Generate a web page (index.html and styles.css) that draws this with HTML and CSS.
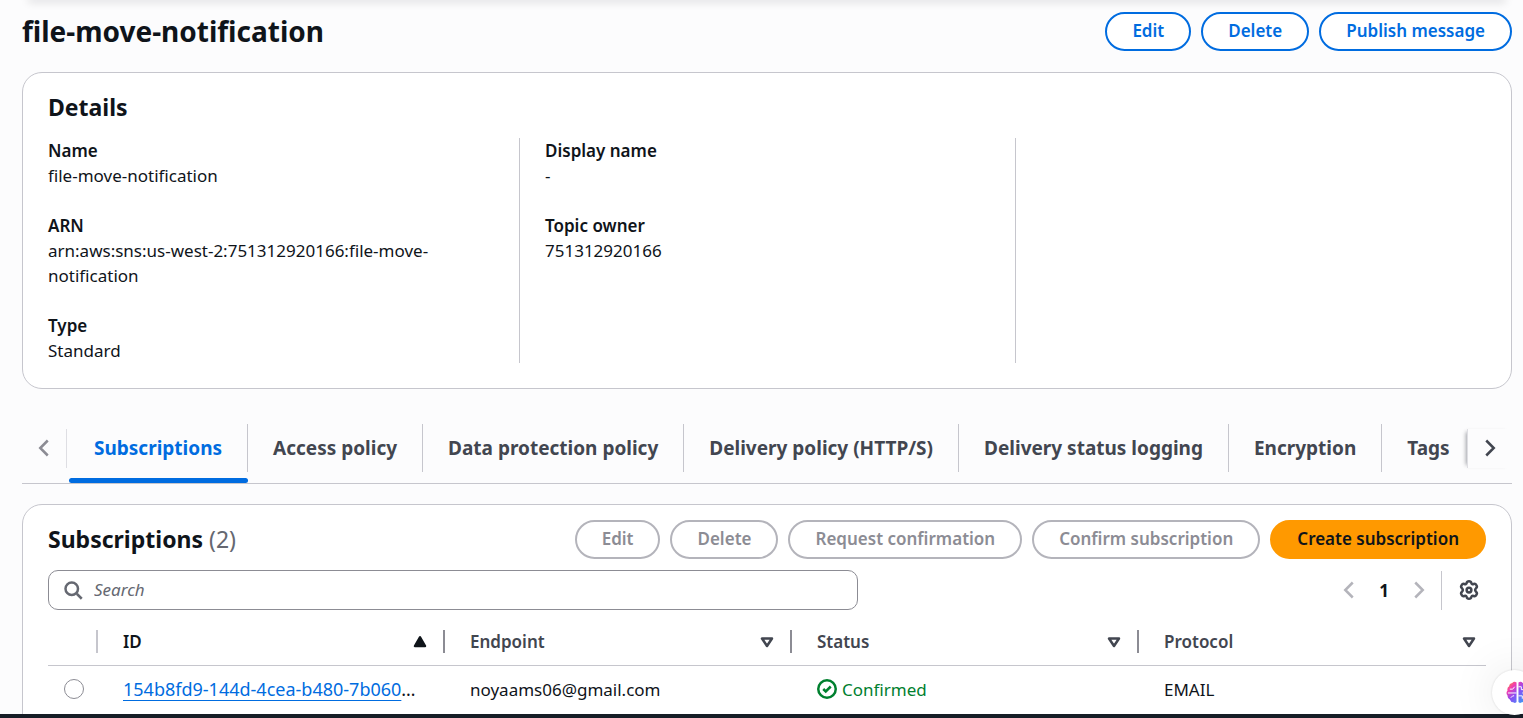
FILE: index.html
```html
<!DOCTYPE html>
<html lang="en">
<head>
<meta charset="utf-8">
<title>file-move-notification</title>
<link rel="stylesheet" href="styles.css">
</head>
<body>
<main class="page">
  <div class="sticky-edge"></div>
  <header class="page-header">
    <h1>file-move-notification</h1>
    <div class="actions">
      <button class="btn" type="button">Edit</button>
      <button class="btn" type="button">Delete</button>
      <button class="btn" type="button">Publish message</button>
    </div>
  </header>

  <section class="card details">
    <h2>Details</h2>
    <div class="columns">
      <dl class="column">
        <div><dt>Name</dt><dd>file-move-notification</dd></div>
        <div><dt>ARN</dt><dd>arn:aws:sns:us-west-2:751312920166:file-move-notification</dd></div>
        <div><dt>Type</dt><dd>Standard</dd></div>
      </dl>
      <dl class="column">
        <div><dt>Display name</dt><dd>-</dd></div>
        <div><dt>Topic owner</dt><dd>751312920166</dd></div>
      </dl>
      <div class="column"></div>
    </div>
  </section>

  <nav class="tabs" aria-label="Topic sections">
    <button class="scroll scroll-left" type="button" aria-label="Scroll left" disabled>
      <svg class="icon" viewBox="0 0 16 16"><path d="M11 2 5 8l6 6"/></svg>
    </button>
    <div class="tab-list" role="tablist">
      <button class="tab active" role="tab" aria-selected="true" type="button"><span>Subscriptions</span></button>
      <button class="tab" role="tab" type="button"><span>Access policy</span></button>
      <button class="tab" role="tab" type="button"><span>Data protection policy</span></button>
      <button class="tab" role="tab" type="button"><span>Delivery policy (HTTP/S)</span></button>
      <button class="tab" role="tab" type="button"><span>Delivery status logging</span></button>
      <button class="tab" role="tab" type="button"><span>Encryption</span></button>
      <button class="tab" role="tab" type="button"><span>Tags</span></button>
    </div>
    <button class="scroll scroll-right" type="button" aria-label="Scroll right">
      <svg class="icon" viewBox="0 0 16 16"><path d="m5 2 6 6-6 6"/></svg>
    </button>
  </nav>

  <section class="card subscriptions">
    <div class="table-header">
      <h2>Subscriptions <span class="count">(2)</span></h2>
      <div class="actions">
        <button class="btn" type="button" disabled>Edit</button>
        <button class="btn" type="button" disabled>Delete</button>
        <button class="btn" type="button" disabled>Request confirmation</button>
        <button class="btn" type="button" disabled>Confirm subscription</button>
        <button class="btn primary" type="button">Create subscription</button>
      </div>
    </div>
    <div class="tools">
      <label class="search">
        <svg class="icon" viewBox="0 0 16 16"><circle cx="7" cy="7" r="5"/><path d="m11 11 4 4"/></svg>
        <input type="search" placeholder="Search" aria-label="Search">
      </label>
      <div class="pager">
        <button type="button" aria-label="Previous page" disabled><svg class="icon" viewBox="0 0 16 16"><path d="M11 2 5 8l6 6"/></svg></button>
        <button class="current" type="button">1</button>
        <button type="button" aria-label="Next page" disabled><svg class="icon" viewBox="0 0 16 16"><path d="m5 2 6 6-6 6"/></svg></button>
      </div>
      <button class="settings" type="button" aria-label="Preferences">
        <svg class="icon" viewBox="0 0 16 16"><path d="M6.2 2.3Q6.400 1 8 1T9.800 2.300Q10.300 3.700 11.700 3.200 13.100 2.700 13.900 4.100 14.900 5.600 13.600 6.600 12.300 8 13.600 9.400 14.900 10.400 13.900 11.900 13.100 13.300 11.700 12.800 10.300 12.300 9.800 13.700 9.600 15 8 15T6.200 13.700Q5.700 12.300 4.300 12.800 2.900 13.300 2.100 11.900 1.100 10.400 2.400 9.400 3.700 8 2.400 6.600 1.100 5.600 2.100 4.100 2.900 2.700 4.300 3.200 5.700 3.700 6.200 2.300Z"/><circle cx="8" cy="8" r="1.900"/></svg>
      </button>
    </div>
    <table>
      <colgroup><col class="c-select"><col class="c-id"><col class="c-mid"><col class="c-mid"><col></colgroup>
      <thead>
        <tr>
          <th aria-label="Selection"></th>
          <th class="sorted"><div class="th">ID <svg class="icon caret" viewBox="0 0 16 16"><path d="M8 5 4 12h8Z"/></svg></div></th>
          <th><div class="th">Endpoint <svg class="icon caret" viewBox="0 0 16 16"><path d="M4 6h8l-4 6Z"/></svg></div></th>
          <th><div class="th">Status <svg class="icon caret" viewBox="0 0 16 16"><path d="M4 6h8l-4 6Z"/></svg></div></th>
          <th><div class="th">Protocol <svg class="icon caret" viewBox="0 0 16 16"><path d="M4 6h8l-4 6Z"/></svg></div></th>
        </tr>
      </thead>
      <tbody>
        <tr>
          <td class="select"><input type="radio" name="subscription" aria-label="Select subscription"></td>
          <td class="id"><a href="#">154b8fd9-144d-4cea-b480-7b060</a>…</td>
          <td>noyaams06@gmail.com</td>
          <td><span class="status"><svg class="icon" viewBox="0 0 16 16"><circle cx="8" cy="8" r="7"/><path d="m5 8 2 2 4-4"/></svg>Confirmed</span></td>
          <td>EMAIL</td>
        </tr>
      </tbody>
    </table>
  </section>
</main>
<footer class="footer"></footer>
<button class="assistant" type="button" aria-label="Assistant">
  <svg viewBox="0 0 24 24">
    <defs><linearGradient id="brain" x1="0" y1="0" x2="1" y2="1"><stop offset="0" stop-color="#ff9a1f"/><stop offset=".25" stop-color="#f23bb0"/><stop offset=".5" stop-color="#8a4df5"/><stop offset="1" stop-color="#22b5f5"/></linearGradient></defs>
    <path fill="url(#brain)" d="M11 1.500Q8.500 0 6.500 2 3.500 2.500 3.300 5.500.8 7 1.600 10-.6 12.500 1.600 15 1.300 18 4 19.200 5 22 7.500 22.200 9.800 23.600 11 22ZM13 1.500Q15.500 0 17.500 2 20.500 2.500 20.700 5.500 23.200 7 22.400 10 24.600 12.500 22.400 15 22.700 18 20 19.200 19 22 16.500 22.200 14.200 23.600 13 22Z"/>
    <path fill="none" stroke="#fff" stroke-width="1" d="M2 12.500h9M4 8.500h3l2-2.500M5 17.500l2-2h1.500M22 12.500h-5M13 6h3v3h3M13 15.500h4v3"/>
  </svg>
</button>
</body>
</html>
```
FILE: styles.css
```css
* { box-sizing: border-box; }

body {
  margin: 0;
  height: 100vh;
  display: flex;
  flex-direction: column;
  overflow: hidden;
  background: #fcfcfd;
  color: #0f141a;
  font: 17px/25px "Noto Sans", "Open Sans", sans-serif;
}

h1, h2, dl, dd { margin: 0; }
h1 { font-size: 28px; line-height: 38px; }
h2 { font-size: 23px; line-height: 28px; }

button {
  font: inherit;
  color: inherit;
  background: none;
  border: 0;
  padding: 0;
}

.icon {
  display: block;
  flex: none;
  width: 20px;
  height: 20px;
  fill: none;
  stroke: currentColor;
  stroke-width: 2;
}

.page {
  flex: 1;
  min-height: 0;
  overflow: hidden;
  padding: 0 11px 0 22px;
}

.sticky-edge {
  height: 1px;
  margin: -1px 8px 0;
  border-radius: 16px;
  box-shadow: 0 0 8px 2px #00071626;
}

.page-header {
  display: flex;
  justify-content: space-between;
  padding: 12px 0 21px;
}

.actions { display: flex; gap: 10px; }

.btn {
  height: 39px;
  padding: 0 25px 2px;
  border: 2px solid #006ce0;
  border-radius: 20px;
  background: #fff;
  color: #006ce0;
  font-size: 17px;
  font-weight: 600;
  white-space: nowrap;
}
.btn:disabled { border-color: #b4b4bb; color: #8c8c94; }
.btn.primary { border-color: #ff9900; background: #ff9900; color: #0f141a; }

.card {
  border: 1px solid #c6c6cd;
  border-radius: 20px;
  background: #fff;
}

.details { padding: 20px 0 25px; }
.details h2 { padding: 0 25px; margin-bottom: 17px; }
.columns { display: grid; grid-template-columns: repeat(3, 1fr); }
.column {
  display: flex;
  flex-direction: column;
  gap: 25px;
  padding: 0 25px;
}
.column + .column { border-left: 1px solid #c6c6cd; }
dt { font-weight: 600; }
dd { overflow-wrap: break-word; }

.tabs {
  display: flex;
  align-items: center;
  height: 60px;
  margin: 35px 0 20px;
  border-bottom: 1px solid #c6c6cd;
}
.scroll {
  display: flex;
  align-items: center;
  justify-content: center;
  flex: none;
  width: 45px;
  height: 39px;
  margin-bottom: 11px;
  color: #424650;
}
.scroll-left { border-right: 1px solid #dedee3; }
.scroll-left:disabled { color: #8c8c94; }
.scroll-right {
  border-left: 1px solid #dedee3;
  box-shadow: -4px 0 4px -3px #00071660;
}
.tab-list {
  display: flex;
  flex: 1;
  min-width: 0;
  height: 59px;
  overflow: hidden;
  padding-left: 2px;
}
.tab {
  flex: none;
  display: flex;
  flex-direction: column;
  color: #424650;
  font-size: 19px;
  font-weight: 700;
  white-space: nowrap;
}
.tab span {
  padding: 0 25px;
  border-right: 1px solid #c6c6cd;
  line-height: 48px;
}
.tab::after {
  content: "";
  width: 100%;
  height: 5px;
  margin-top: 6px;
  border-radius: 3px;
}
.tab.active { color: #006ce0; }
.tab.active::after { background: #006ce0; }
.tab:last-child span { padding-right: 0; border-right: 0; }

.subscriptions { padding: 15px 25px 25px; }
.table-header { display: flex; justify-content: space-between; }
.table-header h2 { line-height: 38px; }
.count { color: #656871; font-weight: 400; }

.tools { display: flex; align-items: center; margin-top: 11px; }
.search {
  display: flex;
  align-items: center;
  gap: 11px;
  width: 810px;
  height: 40px;
  padding: 0 14px;
  border: 1px solid #8c8c94;
  border-radius: 10px;
  color: #656871;
}
.search input {
  flex: 1;
  min-width: 0;
  padding: 0 0 2px;
  border: 0;
  outline: 0;
  background: none;
  font: inherit;
}
.search input::placeholder { color: #656871; font-style: italic; }
.pager { display: flex; gap: 15px; margin-left: auto; padding-right: 12px; }
.pager button { width: 20px; color: #b4b4bb; }
.pager button.current { color: #0f141a; font-weight: 700; }
.settings {
  height: 39px;
  padding: 0 7px 0 17px;
  border-left: 1px solid #c6c6cd;
  color: #424650;
}
.pager, .settings { flex: none; }

table { width: 100%; table-layout: fixed; border-collapse: collapse; margin-top: 8px; }
.c-select { width: 50px; }
.c-id, .c-mid { width: 347px; }
th, td { padding: 0 0 0 25px; height: 48px; text-align: left; white-space: nowrap; }
th { height: 47px; color: #424650; font-weight: 600; border-bottom: 1px solid #c6c6cd; }
th:first-child, td:first-child { padding-left: 16px; }
.th {
  display: flex;
  align-items: center;
  justify-content: space-between;
  height: 23px;
  padding-right: 13px;
  border-right: 2px solid #8c8c94;
}
th:first-child { background: linear-gradient(#c6c6cd, #c6c6cd) right center / 2px 23px no-repeat; }
th:last-child .th { padding-right: 7px; border-right: 0; }
.sorted { color: #0f141a; }
.sorted .caret path { fill: currentColor; }
.caret path { stroke-linejoin: round; }

td input[type="radio"] {
  display: block;
  appearance: none;
  width: 20px;
  height: 20px;
  margin: 0;
  border: 1px solid #8c8c94;
  border-radius: 50%;
  background: #fff;
}
.id { font-size: 18px; }
a { color: #006ce0; text-decoration: underline; text-underline-offset: 4px; text-decoration-thickness: 1px; }
.status { display: flex; align-items: center; gap: 5px; color: #00802f; }

.footer { flex: none; height: 4px; background: #161d26; }

.assistant {
  position: fixed;
  right: -14px;
  bottom: 3px;
  width: 45px;
  height: 45px;
  padding: 11px 14px;
  border-radius: 50%;
  background: #fff;
  box-shadow: 0 0 3px #0002, 0 0 45px #0000001a;
}
.assistant svg { display: block; width: 23px; height: 23px; }
```
